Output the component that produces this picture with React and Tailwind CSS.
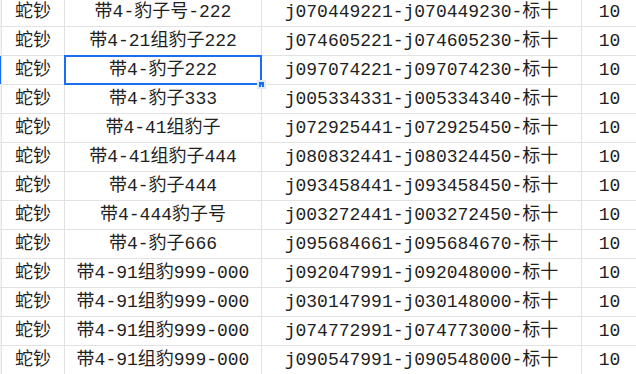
import React from 'react';

const rows = [
  ['蛇钞', '带4-豹子号-222', 'j070449221-j070449230-标十', '10'],
  ['蛇钞', '带4-21组豹子222', 'j074605221-j074605230-标十', '10'],
  ['蛇钞', '带4-豹子222', 'j097074221-j097074230-标十', '10'],
  ['蛇钞', '带4-豹子333', 'j005334331-j005334340-标十', '10'],
  ['蛇钞', '带4-41组豹子', 'j072925441-j072925450-标十', '10'],
  ['蛇钞', '带4-41组豹子444', 'j080832441-j080324450-标十', '10'],
  ['蛇钞', '带4-豹子444', 'j093458441-j093458450-标十', '10'],
  ['蛇钞', '带4-444豹子号', 'j003272441-j003272450-标十', '10'],
  ['蛇钞', '带4-豹子666', 'j095684661-j095684670-标十', '10'],
  ['蛇钞', '带4-91组豹999-000', 'j092047991-j092048000-标十', '10'],
  ['蛇钞', '带4-91组豹999-000', 'j030147991-j030148000-标十', '10'],
  ['蛇钞', '带4-91组豹999-000', 'j074772991-j074773000-标十', '10'],
  ['蛇钞', '带4-91组豹999-000', 'j090547991-j090548000-标十', '10'],
];

const cell = 'flex items-center justify-center border-r border-b border-[#e2e2e2] whitespace-nowrap';

export default function App() {
  return (
    <div className="w-[636px] h-[374px] overflow-hidden bg-white">
      {/* sheet is scrolled so the first row is cut by 2px */}
      <div
        className="-mt-[2px] grid grid-cols-[2px_63px_197px_320px_56px] text-[18px] leading-none text-[#1f1f1f]"
        style={{ fontFamily: '"Liberation Mono", "Noto Sans CJK SC", monospace' }}
      >
        {rows.map((r, i) => {
          const active = i === 2;
          return (
            <React.Fragment key={i}>
              <div className={`h-[29px] border-b border-r border-[#e2e2e2] ${active ? 'bg-[#1a6ef0]' : 'bg-[#f5f5f5]'}`} />
              <div className={`${cell} h-[29px]`}>{r[0]}</div>
              <div className={`${cell} h-[29px] relative`}>
                {r[1]}
                {active && (
                  <>
                    <div className="absolute -left-px -top-px -right-px -bottom-px border-2 border-[#1a6ef0]" />
                    <div className="absolute -right-[5px] -bottom-[5px] w-[9px] h-[9px] bg-[#1a6ef0] border-2 border-[#dfe9fb]" />
                  </>
                )}
              </div>
              <div className={`${cell} h-[29px]`}>{r[2]}</div>
              <div className={`${cell} h-[29px]`}>{r[3]}</div>
            </React.Fragment>
          );
        })}
      </div>
    </div>
  );
}
